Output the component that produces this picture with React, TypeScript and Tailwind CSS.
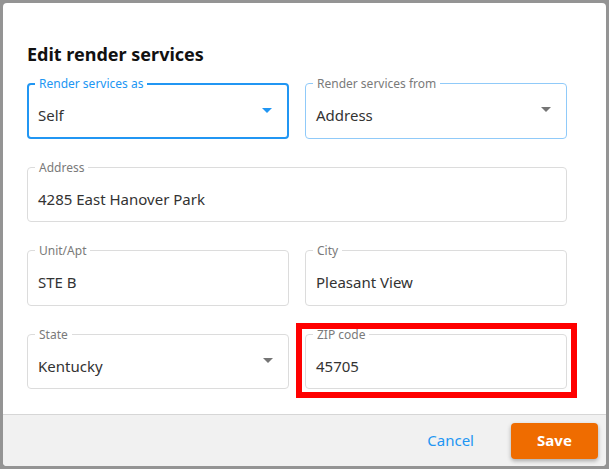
import React from 'react';

type FieldProps = {
  label: string;
  value: string;
  select?: boolean;
  focused?: boolean;
  active?: boolean;
};

function Arrow({ color }: { color: string }) {
  return (
    <svg width="10" height="5" viewBox="0 0 10 5" className="absolute right-[15px] top-[23px]">
      <path d="M0 0h10L5 5z" fill={color} />
    </svg>
  );
}

function Field({ label, value, select, focused, active }: FieldProps) {
  const border = focused
    ? 'border-2 border-[#2196f3]'
    : active
    ? 'border border-[#90caf9]'
    : 'border border-[#dcdcdc]';
  return (
    <div className={`relative h-[55.5px] rounded-[4px] bg-white ${border}`}>
      <span
        className={`absolute ${focused ? 'left-[6px] -top-[8px]' : 'left-[7px] -top-[7px]'} bg-white px-[4px] text-[12px] leading-[14px] ${focused ? 'text-[#2196f3]' : 'text-[#7a7a7a]'}`}
      >
        {label}
      </span>
      <div className={`flex h-full items-center ${focused ? 'pl-[9px] pt-[8px]' : 'pl-[10px] pt-[9px]'} text-[15px] text-[#333]`}>
        {value}
      </div>
      {select && <Arrow color={focused ? '#2196f3' : '#757575'} />}
    </div>
  );
}

export default function App() {
  return (
    <div className="h-screen w-full bg-[#949494] p-[3px]" style={{ fontFamily: '"Noto Sans", "Open Sans", sans-serif' }}>
      <div className="flex h-full flex-col overflow-hidden rounded-[4px] bg-white">
        <div className="flex-1 pl-[24px] pr-[39px] pt-[39px]">
          <h2 className="text-[18px] font-bold leading-[24px] text-[#111]">Edit render services</h2>

          <div className="mt-[17px] grid grid-cols-2 gap-x-[16px] gap-y-[28px]">
            <Field label="Render services as" value="Self" select focused />
            <Field label="Render services from" value="Address" select active />
            <div className="col-span-2">
              <Field label="Address" value="4285 East Hanover Park" />
            </div>
            <Field label="Unit/Apt" value="STE B" />
            <Field label="City" value="Pleasant View" />
            <Field label="State" value="Kentucky" select />
            <div className="relative">
              <Field label="ZIP code" value="45705" />
              <div className="pointer-events-none absolute -left-[9px] -right-[10px] -top-[11px] -bottom-[9px] border-[6px] border-[#ff0000]" />
            </div>
          </div>
        </div>

        <div className="flex h-[52px] shrink-0 items-center justify-end gap-[37px] border-t border-[#d6d6d6] bg-[#f1f1f1] pr-[8px]">
          <button className="text-[15px] text-[#2196f3]">Cancel</button>
          <button className="h-[36px] w-[87px] rounded-[4px] bg-[#ef6c00] text-[15px] font-bold text-white shadow-[0_2px_4px_rgba(0,0,0,0.3)]">
            Save
          </button>
        </div>
      </div>
    </div>
  );
}
